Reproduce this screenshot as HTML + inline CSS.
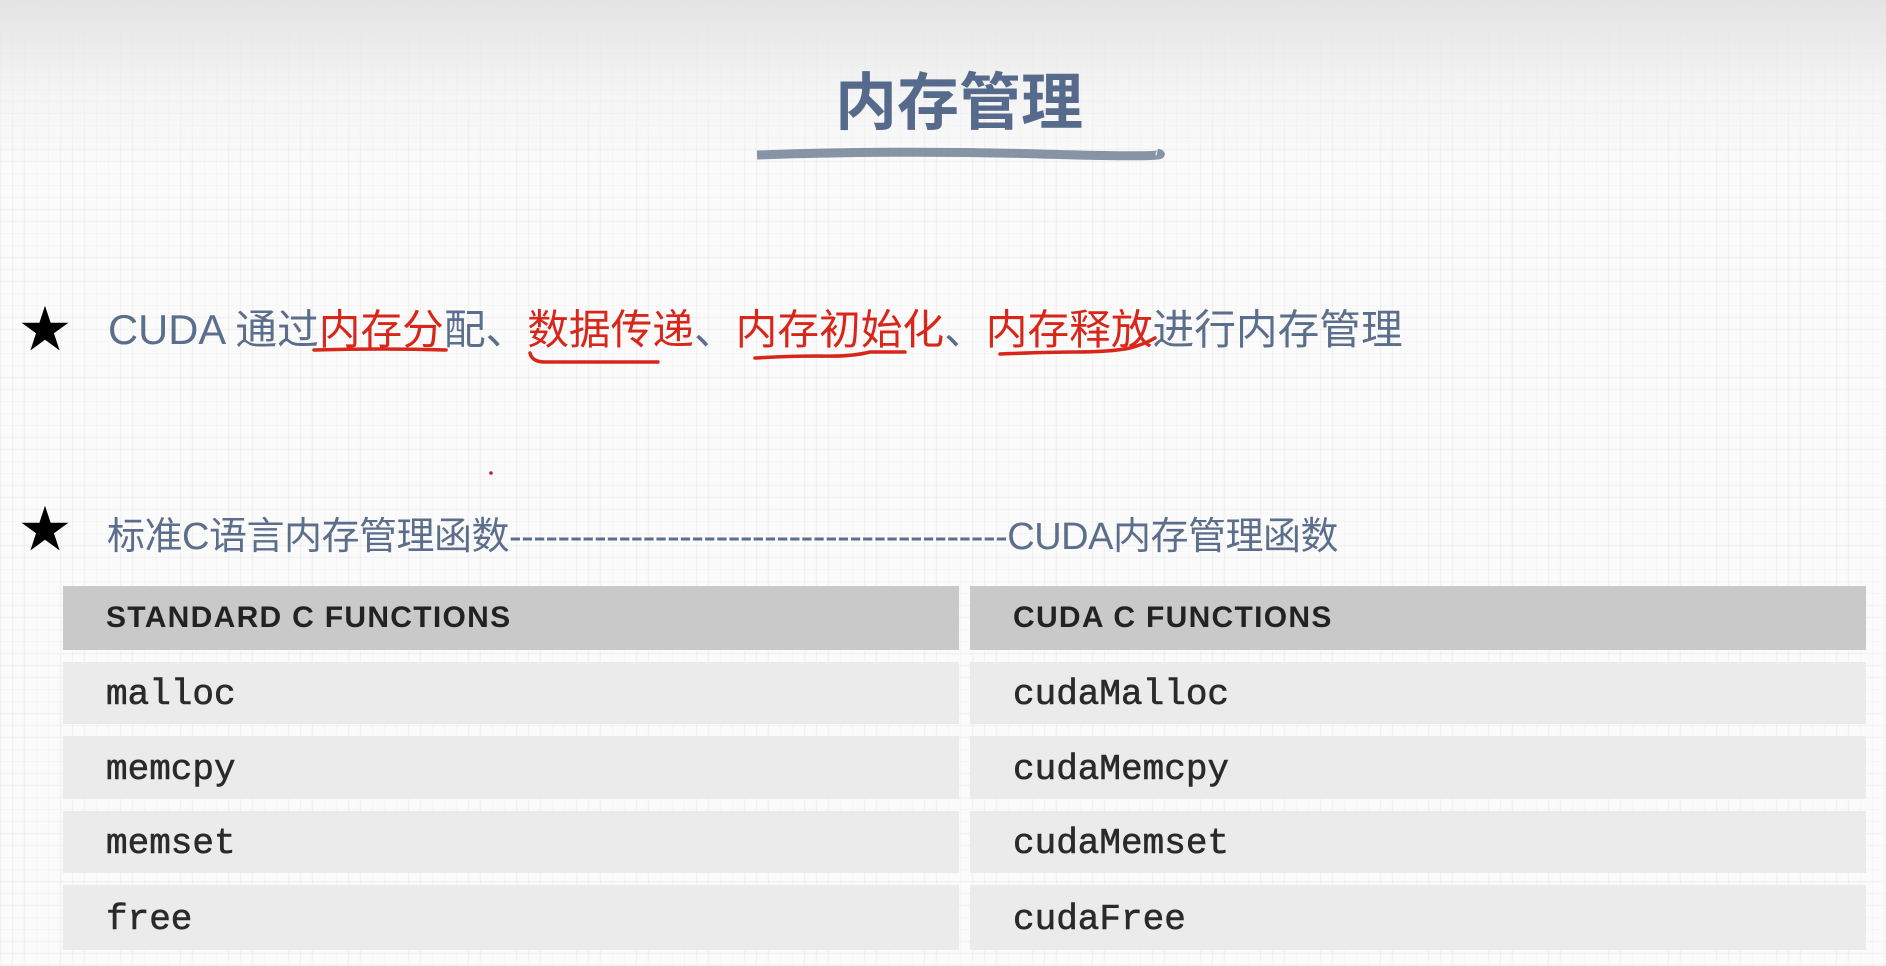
<!DOCTYPE html>
<html><head><meta charset="utf-8">
<style>
html,body{margin:0;padding:0}
body{width:1886px;height:966px;position:relative;overflow:hidden;
background:
linear-gradient(#e3e3e3 0px, rgba(240,240,240,0.6) 90px, rgba(255,255,255,0) 170px),
repeating-linear-gradient(0deg, rgba(0,0,0,0.035) 0 1px, transparent 1px 12px),
repeating-linear-gradient(90deg, rgba(0,0,0,0.035) 0 1px, transparent 1px 12px),
#fbfbfb;
font-family:"Liberation Sans","Noto Sans CJK SC",sans-serif;}
.abs{position:absolute;white-space:nowrap}
.title{left:0;width:1918px;text-align:center;top:66px;font-size:62px;font-weight:bold;color:#566a8c;line-height:76px}
.star{font-size:50px;color:#000;line-height:50px}
.t1{left:108px;top:304px;font-size:41.7px;color:#5b6e8c;line-height:52px}
.r{color:#d8261a}
.t2{left:107px;top:514px;font-size:38px;color:#5b6e8c;line-height:46px;letter-spacing:-0.5px}
.cell{position:absolute}
.h{background:#c9c9c9;font-weight:bold;font-size:30px;color:#222;line-height:64px;padding-left:43px;box-sizing:border-box;letter-spacing:1.3px}
.b{background:#ebebeb;font-family:"Liberation Mono",monospace;font-size:36px;color:#2a2a2a;padding-left:43px;box-sizing:border-box;-webkit-text-stroke:0.6px #2a2a2a}
</style></head><body>
<div class="abs title">内存管理</div>
<svg class="abs" style="left:0;top:0" width="1886" height="966">
<path d="M757 155 Q900 150 1040 154 T1157 153" stroke="#6a7a90" stroke-width="9" fill="none" opacity="0.8"/>
<g stroke="#d8261a" stroke-width="3.5" fill="none" stroke-linecap="round">
<path d="M314 350 Q380 348 446 350"/>
<path d="M530 353 Q532 362 545 362 L658 362"/>
<path d="M755 358 Q790 356 820 356 Q850 357 870 352 L905 352"/>
<path d="M1000 354 Q1050 352 1075 352 Q1110 352 1130 348 Q1145 344 1155 338"/>
</g>
<circle cx="491" cy="473" r="1.8" fill="#c02020"/>
</svg>
<div class="abs star" style="left:20px;top:305px">★</div>
<div class="abs t1">CUDA 通过<span class="r">内存分</span>配、<span class="r">数据传递</span>、<span class="r">内存初始化</span>、<span class="r">内存释放</span>进行内存管理</div>
<div class="abs star" style="left:20px;top:505px">★</div>
<div class="abs t2">标准C语言内存管理函数-----------------------------------------CUDA内存管理函数</div>

<div class="cell h" style="left:63px;top:586px;width:896px;height:64px">STANDARD C FUNCTIONS</div>
<div class="cell h" style="left:970px;top:586px;width:896px;height:64px">CUDA C FUNCTIONS</div>

<div class="cell b" style="left:63px;top:662px;width:896px;height:62px;line-height:66px">malloc</div>
<div class="cell b" style="left:970px;top:662px;width:896px;height:62px;line-height:66px">cudaMalloc</div>
<div class="cell b" style="left:63px;top:736px;width:896px;height:63px;line-height:67px">memcpy</div>
<div class="cell b" style="left:970px;top:736px;width:896px;height:63px;line-height:67px">cudaMemcpy</div>
<div class="cell b" style="left:63px;top:811px;width:896px;height:62px;line-height:66px">memset</div>
<div class="cell b" style="left:970px;top:811px;width:896px;height:62px;line-height:66px">cudaMemset</div>
<div class="cell b" style="left:63px;top:885px;width:896px;height:65px;line-height:69px">free</div>
<div class="cell b" style="left:970px;top:885px;width:896px;height:65px;line-height:69px">cudaFree</div>
</body></html>
